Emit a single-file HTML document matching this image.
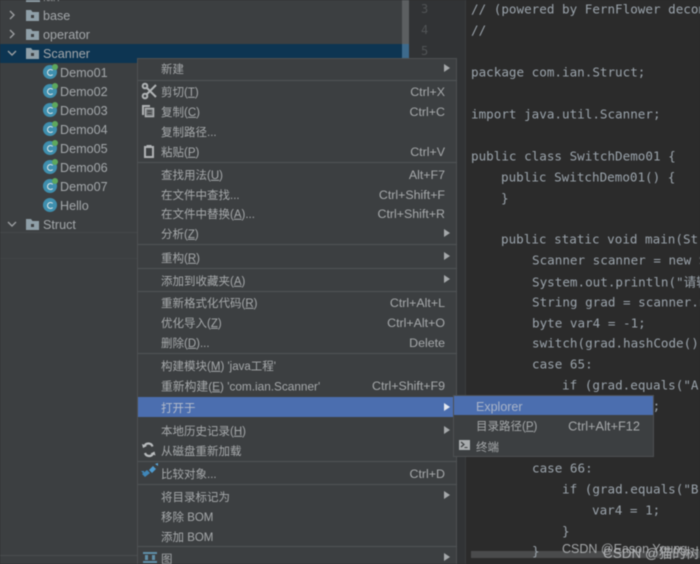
<!DOCTYPE html>
<html><head><meta charset="utf-8"><style>
html,body{margin:0;padding:0;background:#2b2b2b}
#r{position:relative;width:700px;height:564px;overflow:hidden;background:#2b2b2b;filter:blur(.5px)}
#r>*{position:absolute}
.t,.m,.k,.c,.n{position:absolute;white-space:pre;transform:translateY(-50%);line-height:16px}
.t,.m,.k{transform:translateY(calc(-50% + .8px))}
.t{font:12.6px "Liberation Sans","Noto Sans CJK SC",sans-serif;color:#a3a7aa}
.m{left:161px;font:11.5px "Liberation Sans","Noto Sans CJK SC",sans-serif;color:#a6a9ab}
.k{right:255px;font:12.4px "Liberation Sans",sans-serif;color:#a6a9ab}
.c{font:12.6px "DejaVu Sans Mono",monospace;color:#9aa3ab}
.n{font:12px "DejaVu Sans Mono",monospace;color:#505355;left:421px}
.a{position:absolute;left:444px;width:0;height:0;border-left:6px solid #a5a8aa;border-top:4px solid transparent;border-bottom:4px solid transparent;transform:translateY(-50%)}
.s{position:absolute;left:138px;width:319px;height:1px;background:#505355}
.ci{position:absolute;left:43px;width:14px;height:14px;border-radius:50%;background:#3f8fae}
.ci:after{content:"";position:absolute;left:4px;top:3.500px;width:7px;height:7px;border:1.5px solid #dfe6e8;border-right-color:transparent;border-radius:50%;box-sizing:border-box}
.ci.g:before{content:"";position:absolute;right:-1px;top:-1px;width:6px;height:6px;background:#5ea85e;border-radius:50%}
</style></head><body><div id="r">
<div style="left:0;top:0;width:409px;height:564px;background:#3c3f41"></div>
<div style="left:409px;top:0;width:56px;height:564px;background:#313335"></div>
<div style="left:465px;top:0;width:1px;height:564px;background:#3a3c3e"></div>
<div style="left:0;top:44px;width:408px;height:19px;background:#0d3552"></div>
<div style="left:402px;top:0;width:7px;height:44px;background:#5c5f61"></div>
<div style="left:402px;top:44px;width:7px;height:14px;background:#3d6a8c"></div>
<div style="left:0;top:232px;width:138px;height:1px;background:#444749"></div>
<div style="left:0;top:258px;width:138px;height:1px;background:#414446"></div>
<div style="left:0;top:555px;width:138px;height:1px;background:#4a4d4f"></div>

<svg style="left:0;top:0" width="60" height="235" fill="none">
<g stroke="#9a9da0" stroke-width="1.4"><path d="M10 11l4 4-4 4M10 30l4 4-4 4M8 51l4 4 4-4M8 222l4 4 4-4"/></g>
<g fill="#8f9fa8">
<path d="M26 -8h14v10H26z"/><path d="M26 10h5l1.5 2H39v9H26z"/><path d="M26 29h5l1.5 2H39v9H26z"/><path d="M26 48h5l1.5 2H39v9H26z"/><path d="M26 219h5l1.5 2H39v9H26z"/></g>
<g fill="#3c3f41"><rect x="31" y="15" width="3" height="3"/><rect x="31" y="34" width="3" height="3"/><rect x="31" y="53" width="3" height="3"/><rect x="31" y="224" width="3" height="3"/></g>
</svg>
<div class="t" style="left:43px;top:-4px">ian</div>
<div class="t" style="left:43px;top:15px">base</div>
<div class="t" style="left:43px;top:34px">operator</div>
<div class="t" style="left:43px;top:53px">Scanner</div>
<div class="t" style="left:43px;top:224px">Struct</div>
<div class="ci g" style="top:65px"></div><div class="t" style="left:60px;top:72px">Demo01</div>
<div class="ci g" style="top:84px"></div><div class="t" style="left:60px;top:91px">Demo02</div>
<div class="ci g" style="top:103px"></div><div class="t" style="left:60px;top:110px">Demo03</div>
<div class="ci g" style="top:122px"></div><div class="t" style="left:60px;top:129px">Demo04</div>
<div class="ci g" style="top:141px"></div><div class="t" style="left:60px;top:148px">Demo05</div>
<div class="ci g" style="top:160px"></div><div class="t" style="left:60px;top:167px">Demo06</div>
<div class="ci g" style="top:179px"></div><div class="t" style="left:60px;top:186px">Demo07</div>
<div class="ci" style="top:198px"></div><div class="t" style="left:60px;top:205px">Hello</div>

<div class="n" style="top:9px">3</div><div class="n" style="top:30px">4</div><div class="n" style="top:51px">5</div>

<div class="c" style="left:471px;top:9px">// (powered by FernFlower decompiler)</div>
<div class="c" style="left:471px;top:30px">//</div>
<div class="c" style="left:471px;top:72px">package com.ian.Struct;</div>
<div class="c" style="left:471px;top:114px">import java.util.Scanner;</div>
<div class="c" style="left:471px;top:156px">public class SwitchDemo01 {</div>
<div class="c" style="left:501px;top:176.500px">public SwitchDemo01() {</div>
<div class="c" style="left:501px;top:197.500px">}</div>
<div class="c" style="left:501px;top:239px">public static void main(String[] args)</div>
<div class="c" style="left:532px;top:260px">Scanner scanner = new Scanner(</div>
<div class="c" style="left:532px;top:281px">System.out.println("请输入");</div>
<div class="c" style="left:532px;top:301.500px">String grad = scanner.next();</div>
<div class="c" style="left:532px;top:322.500px">byte var4 = -1;</div>
<div class="c" style="left:532px;top:343px">switch(grad.hashCode()) {</div>
<div class="c" style="left:532px;top:364px">case 65:</div>
<div class="c" style="left:562px;top:385px">if (grad.equals("A")) {</div>
<div class="c" style="left:592px;top:406px">var4 = 0;</div>
<div class="c" style="left:532px;top:468px">case 66:</div>
<div class="c" style="left:562px;top:489px">if (grad.equals("B")) {</div>
<div class="c" style="left:592px;top:510px">var4 = 1;</div>
<div class="c" style="left:562px;top:531px">}</div>
<div style="left:471px;top:551px;width:229px;height:7px;background:#4a4b4c"></div>
<div class="c" style="left:532px;top:551px">}</div>
<div style="left:562px;top:549px;transform:translateY(-50%);font:12.5px 'Liberation Sans','Noto Sans CJK SC',sans-serif;color:#a5a7a9;white-space:pre">CSDN @Eason Young</div>
<div style="left:603px;top:552px;transform:translateY(-50%);font:13.5px 'Liberation Sans','Noto Sans CJK SC',sans-serif;color:#b0b2b4;white-space:pre">CSDN @猫的树</div>

<div style="left:137px;top:58px;width:320px;height:510px;background:#3c3f41;border:1px solid #4d5052;box-sizing:border-box"></div>
<div style="left:138px;top:397px;width:318px;height:20px;background:#4b6eaf"></div>

<div class="s" style="top:80px"></div><div class="s" style="top:162px"></div><div class="s" style="top:244px"></div>
<div class="s" style="top:268px"></div><div class="s" style="top:291px"></div><div class="s" style="top:353px"></div>
<div class="s" style="top:461px"></div><div class="s" style="top:484px"></div><div class="s" style="top:546px"></div>

<div class="m" style="top:68px">新建</div><div class="a" style="top:68px"></div>
<div class="m" style="top:91px">剪切(<u>T</u>)</div><div class="k" style="top:91px">Ctrl+X</div>
<div class="m" style="top:111px">复制(<u>C</u>)</div><div class="k" style="top:111px">Ctrl+C</div>
<div class="m" style="top:131px">复制路径...</div>
<div class="m" style="top:151px">粘贴(<u>P</u>)</div><div class="k" style="top:151px">Ctrl+V</div>
<div class="m" style="top:174px">查找用法(<u>U</u>)</div><div class="k" style="top:174px">Alt+F7</div>
<div class="m" style="top:194px">在文件中查找...</div><div class="k" style="top:194px">Ctrl+Shift+F</div>
<div class="m" style="top:213px">在文件中替换(<u>A</u>)...</div><div class="k" style="top:213px">Ctrl+Shift+R</div>
<div class="m" style="top:233px">分析(<u>Z</u>)</div><div class="a" style="top:233px"></div>
<div class="m" style="top:257px">重构(<u>R</u>)</div><div class="a" style="top:256px"></div>
<div class="m" style="top:280px">添加到收藏夹(<u>A</u>)</div><div class="a" style="top:279px"></div>
<div class="m" style="top:302px">重新格式化代码(<u>R</u>)</div><div class="k" style="top:302px">Ctrl+Alt+L</div>
<div class="m" style="top:322px">优化导入(<u>Z</u>)</div><div class="k" style="top:322px">Ctrl+Alt+O</div>
<div class="m" style="top:342px">删除(<u>D</u>)...</div><div class="k" style="top:342px">Delete</div>
<div class="m" style="top:365px">构建模块(<u>M</u>) 'java工程'</div>
<div class="m" style="top:385px;font-size:11.8px">重新构建(<u>E</u>) 'com.ian.Scanner'</div><div class="k" style="top:385px">Ctrl+Shift+F9</div>
<div class="m" style="top:407px;color:#b4bccb">打开于</div><div class="a" style="top:407px;border-left-color:#e4e8ef"></div>
<div class="m" style="top:430px">本地历史记录(<u>H</u>)</div><div class="a" style="top:430px"></div>
<div class="m" style="top:450px">从磁盘重新加载</div>
<div class="m" style="top:473px">比较对象...</div><div class="k" style="top:473px">Ctrl+D</div>
<div class="m" style="top:496px">将目录标记为</div><div class="a" style="top:495px"></div>
<div class="m" style="top:516px">移除 BOM</div>
<div class="m" style="top:536px">添加 BOM</div>
<div class="m" style="top:558px">图</div><div class="a" style="top:557px"></div>

<svg style="left:138px;top:80px" width="24" height="484" fill="none">
<g stroke="#b0b3b5" stroke-width="2"><circle cx="7" cy="6" r="2.300"/><circle cx="7" cy="16" r="2.300"/><path d="M9 8l9 9M9 14l9-9"/></g>
<path d="M4 25h8v2H6v8H4z" fill="#b0b3b5"/><path d="M7.500 28.500h8v8h-8z" stroke="#b0b3b5" stroke-width="1.500" fill="#6d7072"/><path d="M9.500 31h4M9.500 33.500h4" stroke="#3c3f41"/>
<path d="M7 67h8v10H7z" stroke="#b0b3b5" stroke-width="2"/><rect x="8.500" y="65" width="5" height="3" fill="#b0b3b5"/>
<path d="M14.500 366.500a4.300 4.300 0 0 0-8-.5M7 373a4.300 4.300 0 0 0 8 .5" stroke="#b8bbbd" stroke-width="2.200"/><path d="M4 364l1 4 4-2zM17.500 375.500l-1-4-4 2z" fill="#b8bbbd"/>
<path d="M4 394l5-4 3 3-5 4z" fill="#3f86b8"/><path d="M11 390l4-4 3 3-4 4z" fill="#4f9bd0"/><path d="M17 384l3-1 0 3z" fill="#5aa4d6"/><path d="M3 391l3 0 0 3z" fill="#3f86b8"/>
<g fill="#5f8fa8"><rect x="5" y="472" width="14" height="2"/><rect x="5" y="481" width="14" height="2"/><rect x="7" y="475" width="3" height="5"/><rect x="14" y="475" width="3" height="5"/></g>
</svg>

<div style="left:453px;top:395px;width:201px;height:62px;background:#3c3f41;border:1px solid #4d5052;box-sizing:border-box"></div>
<div style="left:454px;top:396px;width:199px;height:19px;background:#4b6eaf"></div>
<div class="m" style="left:476px;top:406px;color:#a9b4c8;font-size:12.500px">Explorer</div>
<div class="m" style="left:476px;top:425px">目录路径(<u>P</u>)</div>
<div class="k" style="right:60px;top:425px;font-size:12.800px">Ctrl+Alt+F12</div>
<svg style="left:459px;top:439px" width="12" height="12"><rect width="11" height="10" y="1" fill="#a9acae"/><path d="M2 3l3 2.500-3 2.500" stroke="#3c3f41" fill="none" stroke-width="1.200"/><path d="M5.500 8.500h3" stroke="#3c3f41"/></svg>
<div class="m" style="left:476px;top:446px">终端</div>
</div></body></html>
